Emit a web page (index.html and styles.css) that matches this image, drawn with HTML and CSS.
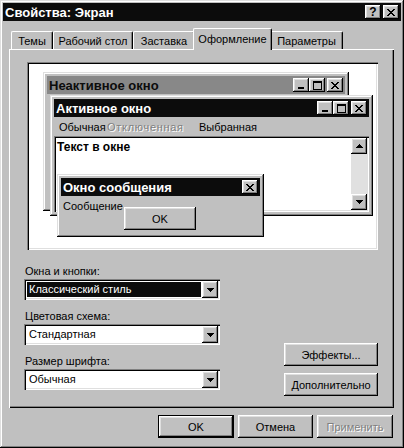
FILE: index.html
```html
<!DOCTYPE html>
<html lang="ru">
<head>
    <meta charset="UTF-8">
    <title>Свойства: Экран</title>
    <link rel="stylesheet" href="styles.css">
</head>
<body>
    <div class="dialog">
        <div class="titlebar">
            <span class="title">Свойства: Экран</span>
            <span class="caption-btns">
                <span class="cbtn help">?</span>
                <span class="cbtn"><svg width="8" height="7" viewBox="0 0 8 7"><path d="M0 0h2v1H0zM6 0h2v1H6zM1 1h2v1H1zM5 1h2v1H5zM2 2h4v1H2zM3 3h2v1H3zM2 4h4v1H2zM1 5h2v1H1zM5 5h2v1H5zM0 6h2v1H0zM6 6h2v1H6z"/></svg></span>
            </span>
        </div>

        <div class="tabs">
            <div class="tab w1">Темы</div>
            <div class="tab w2">Рабочий стол</div>
            <div class="tab w3">Заставка</div>
            <div class="tab w4 active">Оформление</div>
            <div class="tab w5">Параметры</div>
        </div>

        <div class="panel">
            <div class="preview">
                <div class="win inactive">
                    <div class="wtitle">
                        <span>Неактивное окно</span>
                        <span class="caption-btns">
                            <span class="cbtn joined"><svg width="6" height="2"><rect width="6" height="2"/></svg></span>
                            <span class="cbtn"><svg width="9" height="9" viewBox="0 0 9 9"><path d="M0 0h9v9H0zM1 2v6h7V2z" fill-rule="evenodd"/></svg></span>
                            <span class="cbtn"><svg width="8" height="7" viewBox="0 0 8 7"><path d="M0 0h2v1H0zM6 0h2v1H6zM1 1h2v1H1zM5 1h2v1H5zM2 2h4v1H2zM3 3h2v1H3zM2 4h4v1H2zM1 5h2v1H1zM5 5h2v1H5zM0 6h2v1H0zM6 6h2v1H6z"/></svg></span>
                        </span>
                    </div>
                </div>

                <div class="win active-win">
                    <div class="wtitle dark">
                        <span>Активное окно</span>
                        <span class="caption-btns">
                            <span class="cbtn joined"><svg width="6" height="2"><rect width="6" height="2"/></svg></span>
                            <span class="cbtn"><svg width="9" height="9" viewBox="0 0 9 9"><path d="M0 0h9v9H0zM1 2v6h7V2z" fill-rule="evenodd"/></svg></span>
                            <span class="cbtn"><svg width="8" height="7" viewBox="0 0 8 7"><path d="M0 0h2v1H0zM6 0h2v1H6zM1 1h2v1H1zM5 1h2v1H5zM2 2h4v1H2zM3 3h2v1H3zM2 4h4v1H2zM1 5h2v1H1zM5 5h2v1H5zM0 6h2v1H0zM6 6h2v1H6z"/></svg></span>
                        </span>
                    </div>
                    <div class="menu">
                        <span class="item normal">Обычная</span>
                        <span class="item disabled">Отключенная</span>
                        <span class="item">Выбранная</span>
                    </div>
                    <div class="textarea">
                        <span class="wtext">Текст в окне</span>
                        <div class="scroll">
                            <span class="sbtn"><svg width="7" height="4"><path d="M3 0h1v1h1v1h1v1h1v1H0V3h1V2h1V1h1z"/></svg></span>
                            <span class="track"></span>
                            <span class="sbtn"><svg width="7" height="4"><path d="M0 0h7v1H6v1H5v1H4v1H3V3H2V2H1V1H0z"/></svg></span>
                        </div>
                    </div>
                </div>

                <div class="win msg">
                    <div class="wtitle dark">
                        <span>Окно сообщения</span>
                        <span class="caption-btns">
                            <span class="cbtn"><svg width="8" height="7" viewBox="0 0 8 7"><path d="M0 0h2v1H0zM6 0h2v1H6zM1 1h2v1H1zM5 1h2v1H5zM2 2h4v1H2zM3 3h2v1H3zM2 4h4v1H2zM1 5h2v1H1zM5 5h2v1H5zM0 6h2v1H0zM6 6h2v1H6z"/></svg></span>
                        </span>
                    </div>
                    <div class="msg-body">
                        <span>Сообщение</span>
                        <span class="btn msg-ok">OK</span>
                    </div>
                </div>
            </div>

            <div class="options">
                <div class="fields">
                    <label class="lbl">Окна и кнопки:</label>
                    <div class="combo">
                        <span class="value selected">Классический стиль</span>
                        <span class="drop"><svg width="7" height="4"><path d="M0 0h7v1H6v1H5v1H4v1H3V3H2V2H1V1H0z"/></svg></span>
                    </div>
                    <label class="lbl">Цветовая схема:</label>
                    <div class="combo">
                        <span class="value">Стандартная</span>
                        <span class="drop"><svg width="7" height="4"><path d="M0 0h7v1H6v1H5v1H4v1H3V3H2V2H1V1H0z"/></svg></span>
                    </div>
                    <label class="lbl">Размер шрифта:</label>
                    <div class="combo">
                        <span class="value">Обычная</span>
                        <span class="drop"><svg width="7" height="4"><path d="M0 0h7v1H6v1H5v1H4v1H3V3H2V2H1V1H0z"/></svg></span>
                    </div>
                </div>
                <div class="side-btns">
                    <span class="btn side">Эффекты...</span>
                    <span class="btn side">Дополнительно</span>
                </div>
            </div>
        </div>

        <div class="footer">
            <span class="btn default">OK</span>
            <span class="btn">Отмена</span>
            <span class="btn off">Применить</span>
        </div>
    </div>
</body>
</html>
```

FILE: styles.css
```css
body {
    margin: 0;
    background-color: #c0c0c0;
    font-family: "Liberation Sans", Arial, sans-serif;
    font-size: 11px;
    color: #000;
}
.dialog {
    width: 404px;
    height: 448px;
    box-sizing: border-box;
    padding: 3px;
    display: flex;
    flex-direction: column;
    background: #c0c0c0;
    box-shadow: inset -1px -1px #000, inset 1px 1px #dfdfdf, inset -2px -2px #808080, inset 2px 2px #fff;
}
.titlebar {
    height: 18px;
    flex: none;
    display: flex;
    align-items: center;
    padding-left: 2px;
    background: #0c0c0c;
    color: #fff;
    font-size: 13px;
    font-weight: bold;
}
.caption-btns {
    margin-left: auto;
    margin-right: 2px;
    display: flex;
    gap: 2px;
}
.cbtn {
    width: 16px;
    height: 14px;
    display: flex;
    align-items: center;
    justify-content: center;
    background: #c0c0c0;
    color: #000;
    box-shadow: inset -1px -1px #000, inset 1px 1px #fff, inset -2px -2px #808080, inset 2px 2px #dfdfdf;
}
.cbtn.joined {
    margin-right: -2px;
    align-items: flex-end;
    padding-bottom: 3px;
    box-sizing: border-box;
}
.cbtn svg {
    display: block;
    shape-rendering: crispEdges;
}
.cbtn.help {
    font-size: 12px;
    font-weight: bold;
    line-height: 14px;
}

.tabs {
    height: 28px;
    flex: none;
    display: flex;
    align-items: flex-end;
    padding-left: 8px;
}
.tab {
    height: 18px;
    box-sizing: border-box;
    padding-top: 3px;
    text-align: center;
    line-height: 13px;
    border-top: 1px solid #fff;
    border-left: 1px solid #fff;
    border-right: 1px solid #000;
    border-radius: 2px 2px 0 0;
    box-shadow: inset -1px 0 #808080;
}
.w1 { width: 42px; }
.w2 { width: 80px; }
.w3 { width: 62px; }
.w4 { width: 75px; }
.w5 { width: 73px; }
.tab.active {
    position: relative;
    z-index: 1;
    height: 22px;
    width: 79px;
    margin: 0 -2px -1px;
    padding-top: 4px;
    background: #c0c0c0;
}

.panel {
    width: 385px;
    height: 359px;
    flex: none;
    box-sizing: border-box;
    margin-left: 6px;
    padding: 13px 0 0 18px;
    box-shadow: inset 1px 1px #fff, inset -1px -1px #000, inset -2px -2px #808080;
}
.preview {
    position: relative;
    width: 351px;
    height: 188px;
    background: #fff;
    box-shadow: inset 1px 1px #808080, inset 2px 2px #000, inset -1px -1px #fff, inset -2px -2px #dfdfdf;
}

.win {
    position: absolute;
    box-sizing: border-box;
    padding: 4px;
    background: #c0c0c0;
    box-shadow: inset -1px -1px #000, inset 1px 1px #dfdfdf, inset -2px -2px #808080, inset 2px 2px #fff;
}
.inactive { left: 16px; top: 10px; width: 306px; height: 139px; }
.active-win { left: 23px; top: 33px; width: 323px; height: 121px; }
.msg { left: 30px; top: 112px; width: 207px; height: 63px; }

.wtitle {
    height: 18px;
    display: flex;
    align-items: center;
    padding-left: 2px;
    background: #888;
    color: #0c0c0c;
    font-size: 13px;
    font-weight: bold;
}
.wtitle.dark {
    background: #0c0c0c;
    color: #fff;
}
.menu {
    height: 19px;
    display: flex;
    align-items: center;
    padding-left: 5px;
}
.item.normal {
    width: 48px;
}
.item.disabled {
    width: 92px;
    letter-spacing: 0.7px;
    color: #808080;
    text-shadow: 1px 1px #fff;
}
.textarea {
    height: 76px;
    box-sizing: border-box;
    padding: 2px 2px 2px 3px;
    display: flex;
    background: #fff;
    box-shadow: inset 1px 1px #808080, inset 2px 2px #000, inset -1px -1px #fff, inset -2px -2px #dfdfdf;
}
.wtext {
    flex: 1;
    padding-top: 2px;
    font-size: 12px;
    font-weight: bold;
}
.scroll {
    width: 16px;
    display: flex;
    flex-direction: column;
}
.track {
    flex: 1;
    background: #e0e0e0;
}
.sbtn {
    height: 16px;
    display: flex;
    align-items: center;
    justify-content: center;
    background: #c0c0c0;
    box-shadow: inset -1px -1px #000, inset 1px 1px #fff, inset -2px -2px #808080, inset 2px 2px #dfdfdf;
}
.sbtn svg, .drop svg {
    display: block;
    shape-rendering: crispEdges;
}
.msg-body {
    display: grid;
    grid-template-columns: 61px 72px;
    padding: 3px 2px 0;
}
.msg-body span:first-child {
    line-height: 14px;
}
.btn {
    display: flex;
    align-items: center;
    justify-content: center;
    box-sizing: border-box;
    height: 23px;
    background: #c0c0c0;
    box-shadow: inset -1px -1px #000, inset 1px 1px #fff, inset -2px -2px #808080, inset 2px 2px #dfdfdf;
}
.msg-ok {
    margin-top: 8px;
}

.options {
    display: flex;
    justify-content: space-between;
    width: 354px;
    margin: 14px 0 0 -3px;
}
.fields {
    width: 196px;
}
.lbl {
    display: block;
    height: 15px;
    line-height: 15px;
    padding-left: 1px;
}
.combo {
    height: 21px;
    margin-bottom: 9px;
    box-sizing: border-box;
    padding: 2px;
    display: flex;
    background: #fff;
    box-shadow: inset 1px 1px #808080, inset 2px 2px #000, inset -1px -1px #fff, inset -2px -2px #dfdfdf;
}
.value {
    flex: 1;
    margin: 1px;
    padding-left: 2px;
    line-height: 15px;
}
.value.selected {
    background: #0c0c0c;
    color: #fff;
}
.drop {
    width: 16px;
    display: flex;
    align-items: center;
    justify-content: center;
    background: #c0c0c0;
    box-shadow: inset -1px -1px #000, inset 1px 1px #fff, inset -2px -2px #808080, inset 2px 2px #dfdfdf;
}
.side-btns {
    width: 94px;
    margin-top: 79px;
    display: flex;
    flex-direction: column;
    gap: 7px;
}

.footer {
    display: flex;
    justify-content: flex-end;
    gap: 4px;
    margin: 7px 8px 0 0;
}
.footer .btn {
    width: 75px;
}
.btn.default {
    width: 76px;
    border: 1px solid #000;
}
.btn.off {
    width: 76px;
    color: #808080;
    text-shadow: 1px 1px #fff;
}
```
